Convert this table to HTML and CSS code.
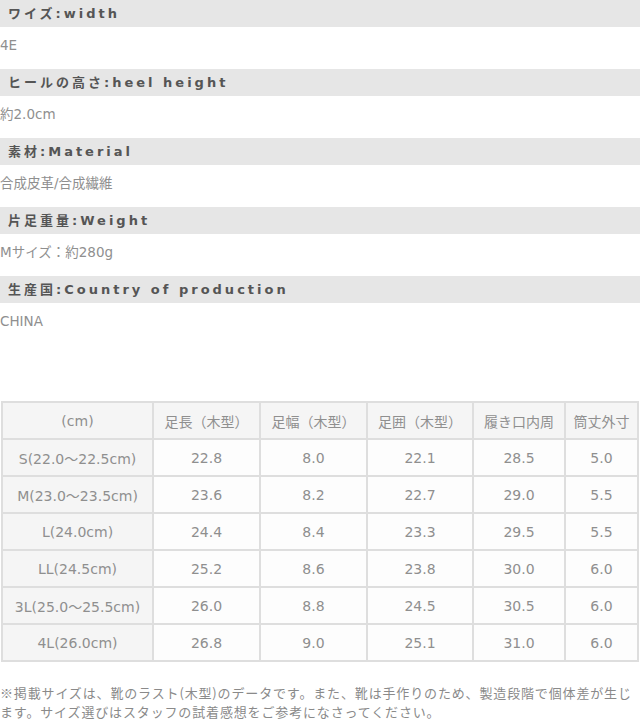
FILE: index.html
```html
<!DOCTYPE html>
<html lang="ja">
<head>
<meta charset="utf-8">
<title>spec</title>
<link rel="stylesheet" href="styles.css">
</head>
<body>
<div class="spec">
  <section class="item">
    <h2 class="item-head">ワイズ:width</h2>
    <p class="item-body">4E</p>
  </section>
  <section class="item">
    <h2 class="item-head">ヒールの高さ:heel height</h2>
    <p class="item-body">約2.0cm</p>
  </section>
  <section class="item">
    <h2 class="item-head">素材:Material</h2>
    <p class="item-body">合成皮革/合成繊維</p>
  </section>
  <section class="item">
    <h2 class="item-head">片足重量:Weight</h2>
    <p class="item-body">Mサイズ：約280g</p>
  </section>
  <section class="item">
    <h2 class="item-head">生産国:Country of production</h2>
    <p class="item-body">CHINA</p>
  </section>
</div>

<table class="size">
  <colgroup>
    <col class="c1"><col class="c2"><col class="c3"><col class="c4"><col class="c5"><col class="c6">
  </colgroup>
  <thead>
    <tr><th>(cm)</th><th>足長（木型）</th><th>足幅（木型）</th><th>足囲（木型）</th><th>履き口内周</th><th>筒丈外寸</th></tr>
  </thead>
  <tbody>
    <tr><th>S(22.0～22.5cm)</th><td>22.8</td><td>8.0</td><td>22.1</td><td>28.5</td><td>5.0</td></tr>
    <tr><th>M(23.0～23.5cm)</th><td>23.6</td><td>8.2</td><td>22.7</td><td>29.0</td><td>5.5</td></tr>
    <tr><th>L(24.0cm)</th><td>24.4</td><td>8.4</td><td>23.3</td><td>29.5</td><td>5.5</td></tr>
    <tr><th>LL(24.5cm)</th><td>25.2</td><td>8.6</td><td>23.8</td><td>30.0</td><td>6.0</td></tr>
    <tr><th>3L(25.0～25.5cm)</th><td>26.0</td><td>8.8</td><td>24.5</td><td>30.5</td><td>6.0</td></tr>
    <tr><th>4L(26.0cm)</th><td>26.8</td><td>9.0</td><td>25.1</td><td>31.0</td><td>6.0</td></tr>
  </tbody>
</table>

<div class="note">
  <p class="line">※掲載サイズは、靴のラスト(木型)のデータです。また、靴は手作りのため、製造段階で個体差が生じ</p>
  <p class="line">ます。サイズ選びはスタッフの試着感想をご参考になさってください。</p>
</div>
</body>
</html>
```

FILE: styles.css
```css
html, body {
  margin: 0;
  padding: 0;
  background: #fff;
}
body {
  width: 640px;
  font-family: "DejaVu Sans", "Noto Sans CJK JP", sans-serif;
  color: #8a8a8a;
  overflow: hidden;
}
.spec {
  display: flex;
  flex-direction: column;
}
.item {
  display: flex;
  flex-direction: column;
}
.item-head {
  margin: 0;
  height: 27px;
  line-height: 27px;
  padding-left: 8px;
  background: #e6e6e6;
  color: #555;
  font-family: "DejaVu Sans", "Noto Sans CJK JP", sans-serif;
  font-weight: bold;
  font-size: 13px;
  letter-spacing: 3px;
}
.item-body {
  margin: 0;
  padding: 9px 0 15px 0;
  line-height: 18px;
  font-size: 13.5px;
  font-family: "DejaVu Sans", "Noto Sans CJK JP", sans-serif;
  color: #8f8f8f;
}
.size {
  margin: 56px 0 0 1px;
  border-collapse: collapse;
  table-layout: fixed;
  width: 638px;
  font-size: 14px;
  color: #8f8f8f;
}
.c1 { width: 151px; }
.c2 { width: 107px; }
.c3 { width: 107px; }
.c4 { width: 106px; }
.c5 { width: 92px; }
.c6 { width: 73px; }
.size th, .size td {
  border: 2px solid #dedede;
  height: 35px;
  padding: 0;
  text-align: center;
  font-weight: normal;
  white-space: nowrap;
  background: #fdfdfd;
}
.size thead th,
.size tbody th {
  background: #f5f5f5;
}
.note {
  margin-top: 21px;
  display: flex;
  flex-direction: column;
}
.line {
  margin: 0;
  font-family: "Noto Sans CJK JP", sans-serif;
  font-size: 13px;
  letter-spacing: 0.85px;
  line-height: 19px;
  color: #8a8a8a;
  white-space: nowrap;
}
```
